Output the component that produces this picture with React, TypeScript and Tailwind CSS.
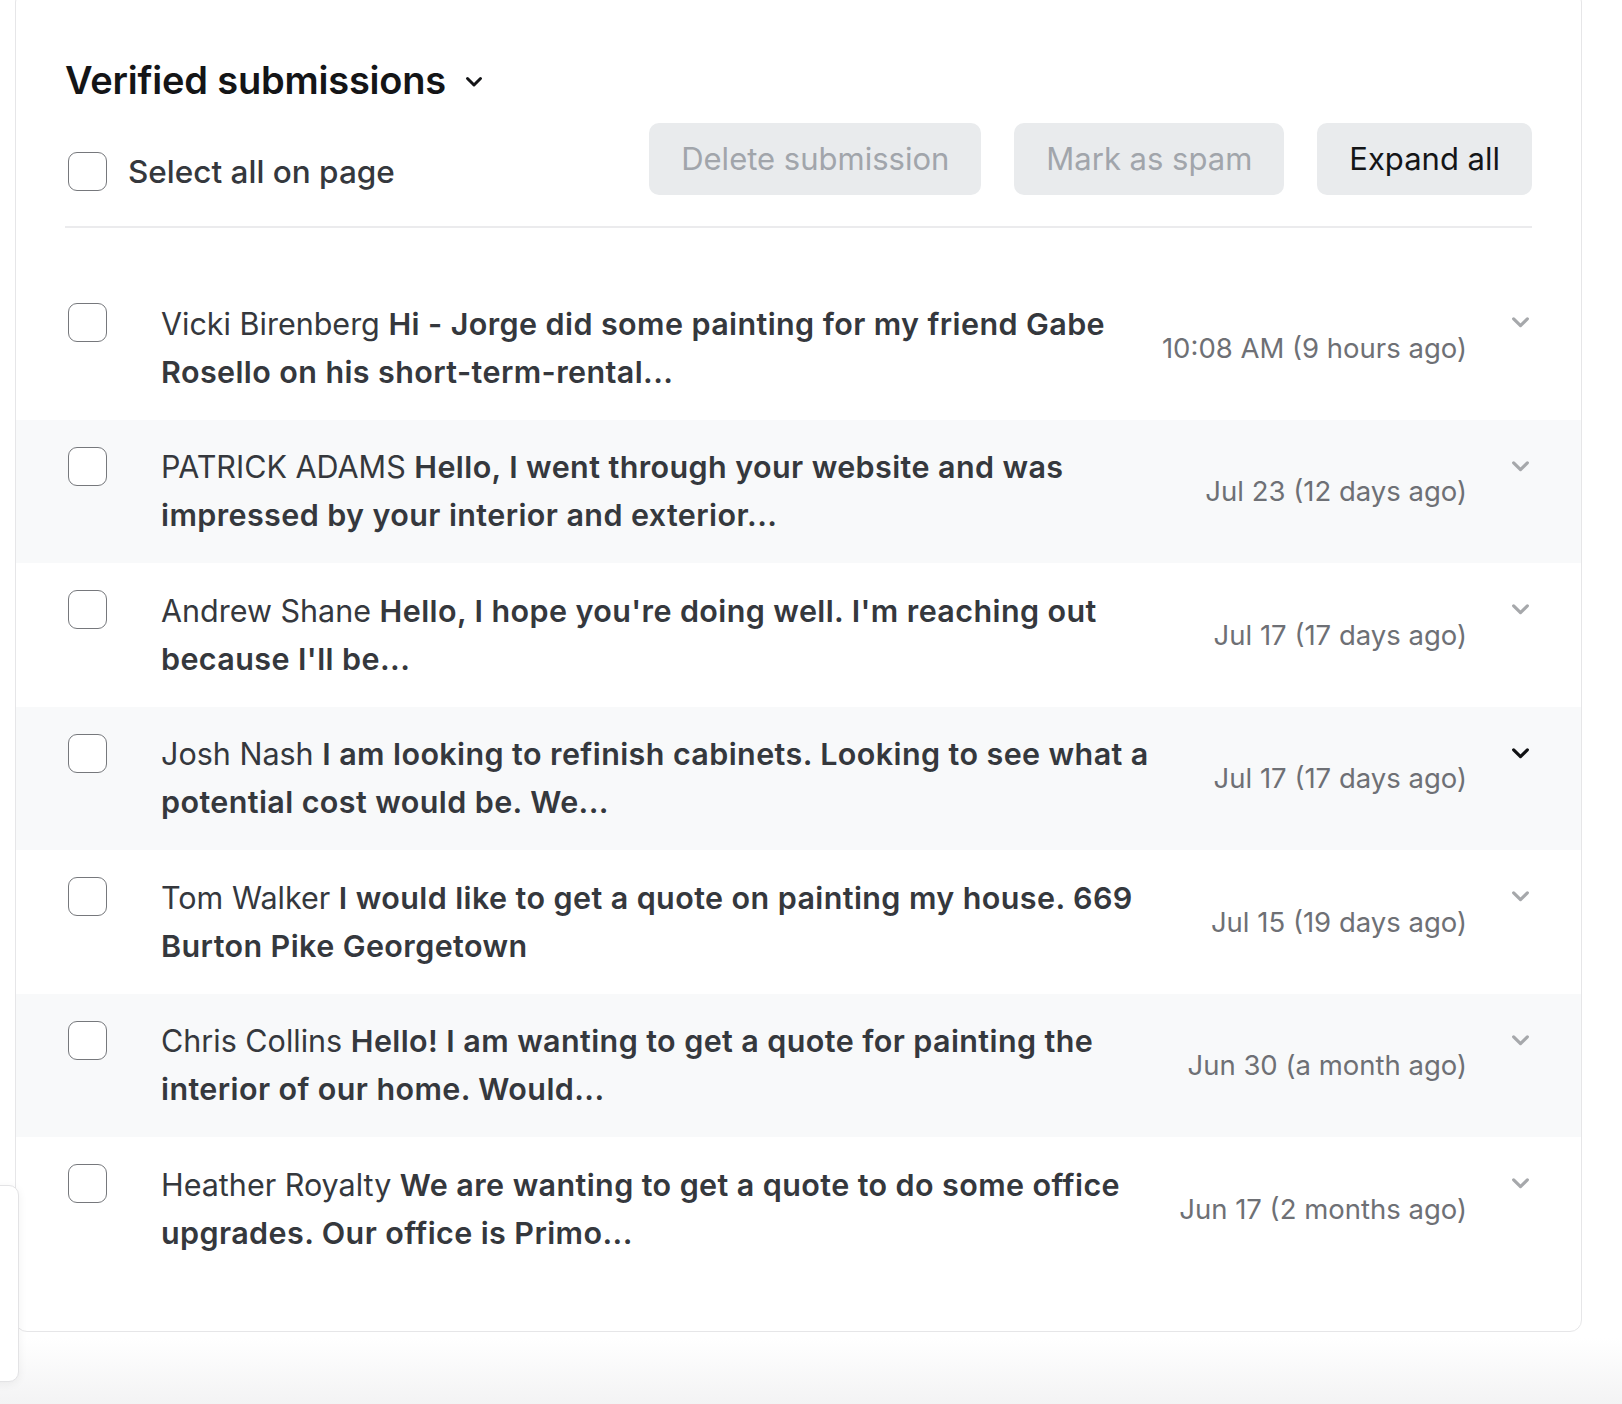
import React from "react";

type Submission = {
  name: string;
  message: string;
  date: string;
  active?: boolean;
};

const submissions: Submission[] = [
  {
    name: "Vicki Birenberg",
    message: "Hi - Jorge did some painting for my friend Gabe Rosello on his short-term-rental...",
    date: "10:08 AM (9 hours ago)",
  },
  {
    name: "PATRICK ADAMS",
    message: "Hello, I went through your website and was impressed by your interior and exterior...",
    date: "Jul 23 (12 days ago)",
  },
  {
    name: "Andrew Shane",
    message: "Hello, I hope you're doing well. I'm reaching out because I'll be...",
    date: "Jul 17 (17 days ago)",
  },
  {
    name: "Josh Nash",
    message: "I am looking to refinish cabinets. Looking to see what a potential cost would be. We...",
    date: "Jul 17 (17 days ago)",
    active: true,
  },
  {
    name: "Tom Walker",
    message: "I would like to get a quote on painting my house. 669 Burton Pike Georgetown",
    date: "Jul 15 (19 days ago)",
  },
  {
    name: "Chris Collins",
    message: "Hello! I am wanting to get a quote for painting the interior of our home. Would...",
    date: "Jun 30 (a month ago)",
  },
  {
    name: "Heather Royalty",
    message: "We are wanting to get a quote to do some office upgrades. Our office is Primo...",
    date: "Jun 17 (2 months ago)",
  },
];

const Chevron = ({ className }: { className?: string }) => (
  <svg viewBox="0 0 18 12" className={className} fill="none">
    <path d="M2.5 2.5 9 9l6.5-6.5" stroke="currentColor" strokeWidth="3" strokeLinecap="round" strokeLinejoin="round" />
  </svg>
);

const Checkbox = ({ className = "" }: { className?: string }) => (
  <span className={`block w-[39px] h-[39px] shrink-0 rounded-[9px] border-[1.5px] border-[#76787c] bg-white ${className}`} />
);

const Row = ({ item, shaded }: { item: Submission; shaded: boolean }) => (
  <div className={`flex items-center h-[143.5px] pl-[52px] pr-[51px] ${shaded ? "bg-[#f8f9fa]" : "bg-white"}`}>
    <Checkbox className="self-start mt-[27px]" />
    <p className="ml-[54px] w-[1010px] min-w-0 text-[30.5px] leading-[48px] text-[#35383d] font-semibold tracking-[0.4px]">
      <span className="font-normal tracking-normal">{item.name} </span>
      {item.message}
    </p>
    <span className="ml-auto shrink-0 text-[27.5px] leading-[36px] text-[#6e7075] whitespace-nowrap">{item.date}</span>
    <Chevron
      className={`self-start mt-[40px] ml-[44px] w-[19px] h-[13px] shrink-0 ${item.active ? "text-[#111214]" : "text-[#a6a8ab]"}`}
    />
  </div>
);

export default function App() {
  return (
    <div
      className="relative w-[1622px] h-[1404px] overflow-hidden bg-white"
      style={{ fontFamily: "Inter, 'Noto Sans', sans-serif" }}
    >
      <div className="ml-[15px] -mt-[10px] w-[1567px] h-[1342px] rounded-[12px] border border-[#e6e6e8] bg-white">
        <div className="pt-[65px] pl-[49px] pr-[49px]">
          <div className="flex items-center gap-[19px]">
            <h1 className="text-[38px] leading-[48px] font-semibold text-[#141517] tracking-[-0.2px]">
              Verified submissions
            </h1>
            <Chevron className="w-[18px] h-[12px] text-[#141517] mt-[4px]" />
          </div>
          <div className="flex items-start mt-[19px]">
            <label className="flex items-center gap-[21px] mt-[29px] ml-[3px]">
              <Checkbox />
              <span className="text-[31.5px] leading-[38px] font-medium text-[#35383d]">Select all on page</span>
            </label>
            <div className="ml-auto flex gap-[33px]">
              <button className="h-[72px] px-[32px] rounded-[10px] bg-[#e9ebed] text-[31px] text-[#a1a5ab]">
                Delete submission
              </button>
              <button className="h-[72px] px-[32px] rounded-[10px] bg-[#e9ebed] text-[31px] text-[#a1a5ab]">
                Mark as spam
              </button>
              <button className="h-[72px] px-[32px] rounded-[10px] bg-[#e9ebed] text-[31px] text-[#141517]">
                Expand all
              </button>
            </div>
          </div>
          <div className="mt-[31px] h-[2px] bg-[#ebebed]" />
        </div>
        <div className="mt-[48px]">
          {submissions.map((s, i) => (
            <Row key={s.name} item={s} shaded={i % 2 === 1} />
          ))}
        </div>
      </div>
      <div className="absolute left-0 right-0 bottom-0 h-[66px] bg-gradient-to-b from-white to-[#f3f3f4]" />
      <div className="absolute left-[-12px] top-[1185px] w-[31px] h-[197px] rounded-[10px] border border-[#e3e3e5] bg-white shadow-[0_2px_10px_rgba(0,0,0,0.06)]" />
    </div>
  );
}
